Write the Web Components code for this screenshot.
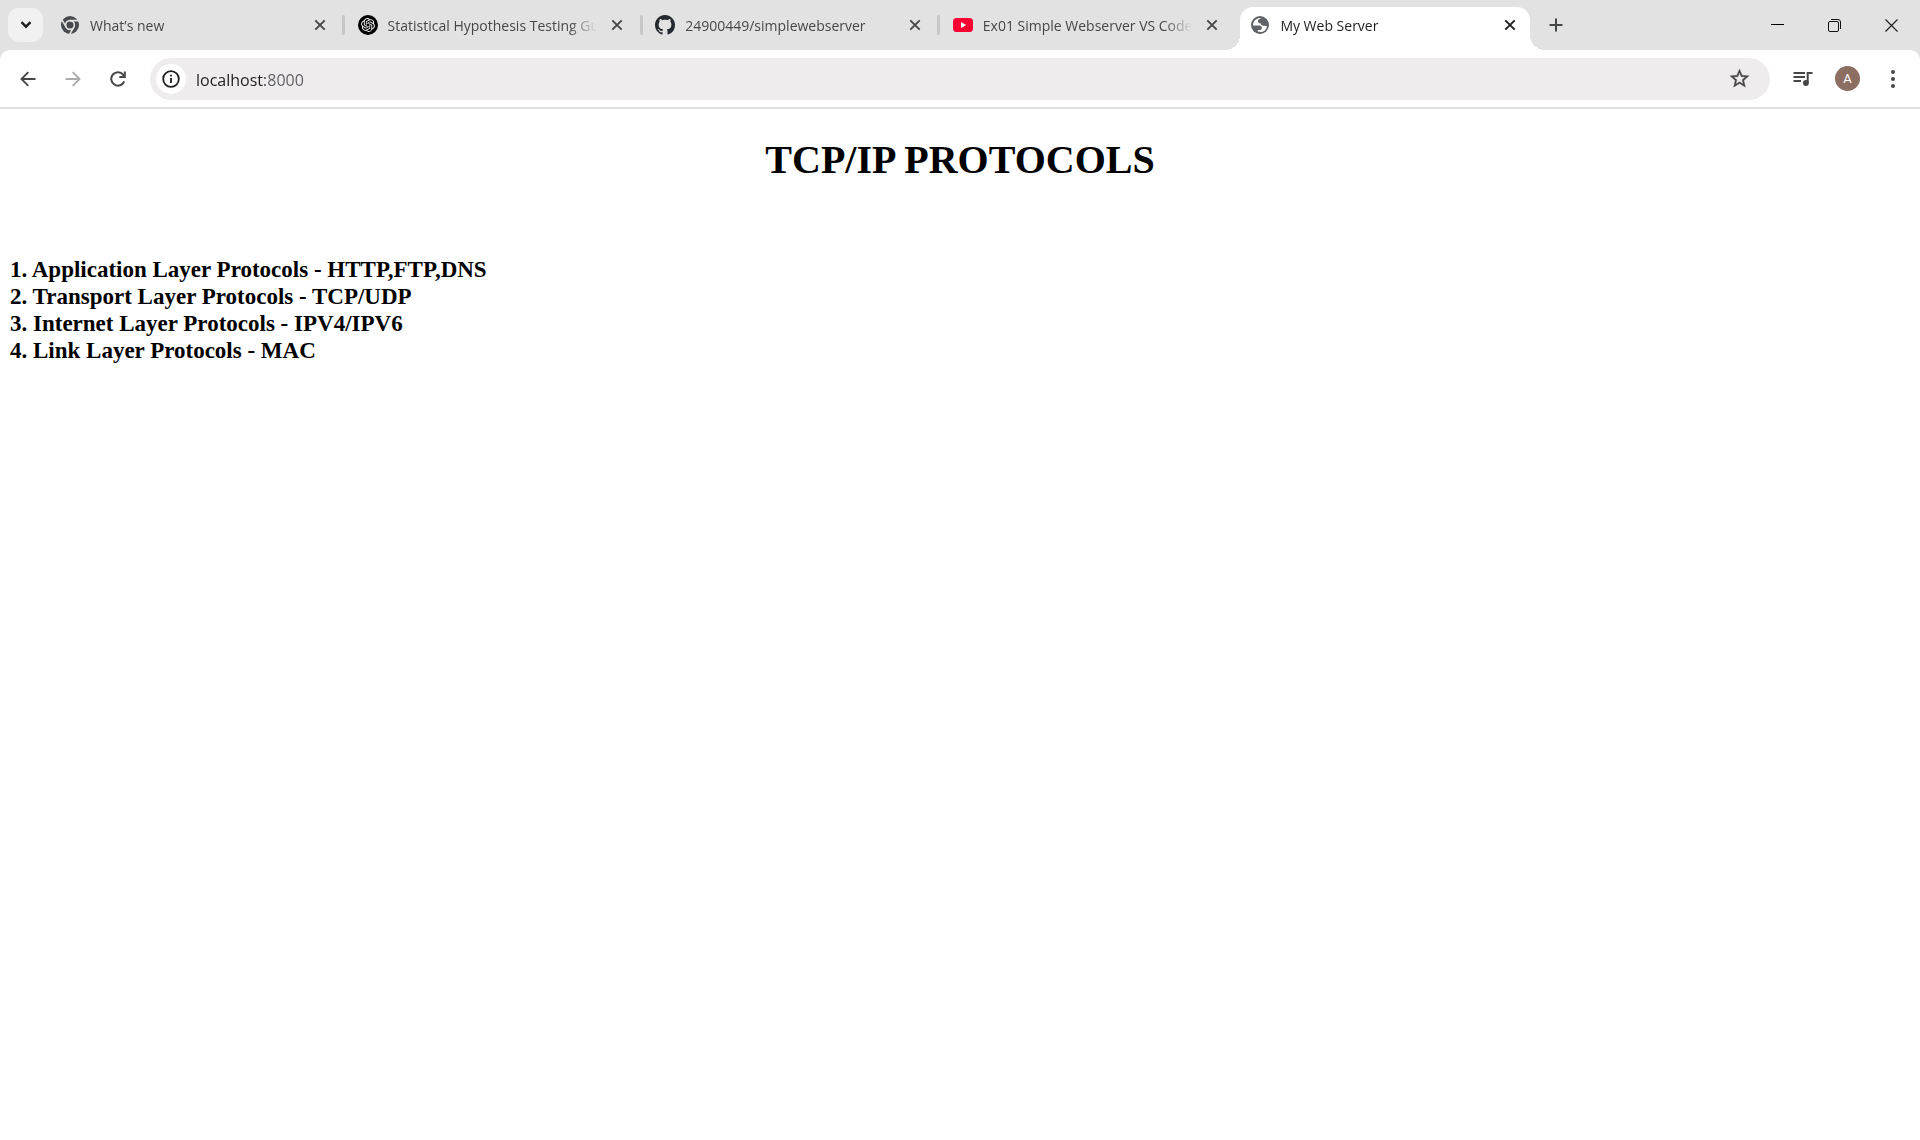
<!DOCTYPE html>
<html lang="en">
<head>
<meta charset="utf-8">
<title>My Web Server</title>
<style>
  body { margin: 0; background: #fff; }
</style>
</head>
<body>
<browser-window></browser-window>

<template id="browser-window">
  <style>
    :host { display: flex; flex-direction: column; min-height: 100vh; background: #fff; font-family: "Open Sans", "Noto Sans", sans-serif; }
  </style>
  <tab-strip>
    <browser-tab label="What’s new"><site-icon slot="icon" name="chrome"></site-icon></browser-tab>
    <tab-divider></tab-divider>
    <browser-tab label="Statistical Hypothesis Testing Gu"><site-icon slot="icon" name="openai"></site-icon></browser-tab>
    <tab-divider></tab-divider>
    <browser-tab label="24900449/simplewebserver"><site-icon slot="icon" name="github"></site-icon></browser-tab>
    <tab-divider></tab-divider>
    <browser-tab label="Ex01 Simple Webserver VS Code"><site-icon slot="icon" name="youtube"></site-icon></browser-tab>
    <tab-divider hidden-line></tab-divider>
    <browser-tab label="My Web Server" active><site-icon slot="icon" name="globe"></site-icon></browser-tab>
  </tab-strip>
  <tool-bar></tool-bar>
  <protocol-page></protocol-page>
</template>

<template id="tab-strip">
  <style>
    :host { display: flex; align-items: stretch; height: 50px; background: #e2e2e2; }
    button { border: 0; padding: 0; background: none; display: grid; place-items: center; color: #1f1f1f; }
    .search { width: 35px; height: 34px; margin: 8px 7px 8px 8px; border-radius: 11px; background: #f1f1f1; flex: none; }
    nav { display: flex; flex: 0 1 1480px; min-width: 0; }
    .add { width: 34px; margin-left: 9px; color: #444746; flex: none; }
    .window { display: flex; margin-left: auto; }
    .window button { width: 57px; }
  </style>
  <button class="search" aria-label="Search tabs"><svg width="12" height="8" viewBox="0 0 12 8" fill="none" stroke="currentColor" stroke-width="2.4"><path d="M1.5 1.2 6 5.7l4.500-4.500"/></svg></button>
  <nav aria-label="Tabs"><slot></slot></nav>
  <button class="add" aria-label="New tab"><svg width="14" height="14" viewBox="0 0 14 14" stroke="currentColor" stroke-width="2"><path d="M7 .5v13M.5 7h13"/></svg></button>
  <div class="window">
    <button aria-label="Minimize"><svg width="13" height="13" viewBox="0 0 13 13" stroke="#000"><path d="M0 5.500h13"/></svg></button>
    <button aria-label="Restore"><svg width="13" height="13" viewBox="0 0 13 13" fill="none" stroke="#111"><rect x=".5" y="2.500" width="10" height="10" rx="1.500"/><path d="M3 .5h7a2.500 2.500 0 0 1 2.500 2.500v7"/></svg></button>
    <button aria-label="Close window"><svg width="13" height="13" viewBox="0 0 13 13" stroke="#222" stroke-width="1.200"><path d="M.5.5l12 12M12.500.5l-12 12"/></svg></button>
  </div>
</template>

<template id="tab-divider">
  <style>
    :host { display: grid; place-items: center; flex: 0 0 8px; }
    i { width: 3px; height: 20px; border-radius: 2px; background: #c7c7c7; }
    :host([hidden-line]) i { visibility: hidden; }
  </style>
  <i></i>
</template>

<template id="browser-tab">
  <style>
    :host { display: flex; flex: 1 1 0; min-width: 0; position: relative; align-items: center; gap: 10px; padding: 0 10px; box-sizing: border-box; color: #474747; }
    :host([active]) { color: #1f1f1f; }
    :host([active])::before { content: ""; position: absolute; inset: 7px 0 0; border-radius: 13px 13px 0 0; background: #fff; }
    .foot { display: none; position: absolute; bottom: 0; width: 15px; height: 15px; }
    :host([active]) .foot { display: block; }
    .left { right: 100%; background: radial-gradient(circle at 0 0, transparent 15px, #fff 15px); }
    .right { left: 100%; background: radial-gradient(circle at 100% 0, transparent 15px, #fff 15px); }
    slot, a, button { position: relative; }
    slot { display: grid; place-items: center; width: 20px; flex: none; }
    a { flex: 1; min-width: 0; padding-top: 2px; overflow: hidden; white-space: nowrap; font-size: 14px; line-height: 20px; color: inherit; text-decoration: none;
        -webkit-mask-image: linear-gradient(to left, transparent, #000 28px); mask-image: linear-gradient(to left, transparent, #000 28px); }
    button { flex: none; width: 20px; height: 20px; padding: 0; border: 0; background: none; color: inherit; display: grid; place-items: center; }
  </style>
  <span class="foot left"></span><span class="foot right"></span>
  <slot name="icon"></slot>
  <a href="#"></a>
  <button aria-label="Close tab"><svg width="12" height="12" viewBox="0 0 12 12" stroke="currentColor" stroke-width="1.900"><path d="M1.300 1.300l9.400 9.400M10.700 1.300l-9.400 9.400"/></svg></button>
</template>

<template id="tool-bar">
  <style>
    :host { display: block; background: #e2e2e2; }
    .bar { display: flex; align-items: center; height: 57px; padding: 0 5px; border-bottom: 2px solid #e0e0e0; border-radius: 10px 10px 0 0; background: #fff; color: #474747; }
    button { width: 45px; height: 42px; flex: none; padding: 0; border: 0; background: none; color: inherit; display: grid; place-items: center; }
    button:disabled { color: #ababab; }
    .address { display: flex; align-items: center; flex: 1; min-width: 0; height: 42px; margin: 0 10px; padding: 0 8px 0 6px; border-radius: 21px; background: #eeeced; box-sizing: border-box; }
    .address .info { width: 30px; height: 30px; border-radius: 50%; background: #fff; color: #1f1f1f; }
    input { flex: 1; min-width: 0; margin-left: 10px; padding: 2px 0 0; border: 0; outline: 0; font: 16px/24px "Open Sans", "Noto Sans", sans-serif;
            color: transparent; background: linear-gradient(to right, #1f1f1f 69px, #5b5c60 69px); -webkit-background-clip: text; background-clip: text; }
    .avatar span { display: grid; place-items: center; width: 25px; height: 25px; border-radius: 50%; background: #8d6e63; color: #fff; font: 13px/25px Roboto, sans-serif; }
  </style>
  <div class="bar">
    <button aria-label="Back"><svg width="16" height="16" viewBox="0 0 16 16" fill="none" stroke="currentColor" stroke-width="1.900"><path d="M15.500 8H2M8.300 1.200 1.500 8l6.800 6.800"/></svg></button>
    <button aria-label="Forward" disabled><svg width="16" height="16" viewBox="0 0 16 16" fill="none" stroke="currentColor" stroke-width="1.900"><path d="M.5 8H14M7.700 1.200 14.500 8l-6.800 6.800"/></svg></button>
    <button aria-label="Reload"><svg width="16" height="16" viewBox="0 0 16 16" fill="none" stroke="currentColor" stroke-width="2"><path d="M14.200 10.300A6.700 6.700 0 1 1 13.200 3.800L14.500 5.600M14.800.5v5.600H9.300"/></svg></button>
    <div class="address">
      <button class="info" aria-label="View site information"><svg width="18" height="18" viewBox="0 0 18 18" fill="none" stroke="currentColor" stroke-width="1.800"><circle cx="9" cy="9" r="7.800"/><path d="M9 8v5M9 4.700v1.900"/></svg></button>
      <input type="text" aria-label="Address" value="localhost:8000" spellcheck="false">
      <button aria-label="Bookmark this tab"><svg width="23" height="23" viewBox="0 0 24 24" fill="currentColor" stroke="currentColor" stroke-width=".3"><path d="M22 9.240l-7.190-.62L12 2 9.190 8.630 2 9.240l5.460 4.730L5.820 21 12 17.270 18.180 21l-1.630-7.030L22 9.240zM12 15.400l-3.760 2.270 1-4.280-3.320-2.880 4.380-.38L12 6.100l1.710 4.040 4.380.38-3.320 2.880 1 4.280L12 15.400z"/></svg></button>
    </div>
    <button aria-label="Media controls"><svg width="20" height="16" viewBox="0 0 20 16" fill="none" stroke="currentColor" stroke-width="2"><path d="M.5 2h11.500M.5 6h11.500M.5 10H8M14.700 12V2H19.500"/><circle cx="12.900" cy="12" r="2.900" fill="currentColor" stroke="none"/></svg></button>
    <button class="avatar" aria-label="Profile"><span>A</span></button>
    <button aria-label="Menu"><svg width="4" height="20" viewBox="0 0 4 20" fill="currentColor"><circle cx="2" cy="3" r="2"/><circle cx="2" cy="10" r="2"/><circle cx="2" cy="17" r="2"/></svg></button>
  </div>
</template>

<template id="protocol-page">
  <style>
    :host { display: block; padding: 28px 10px; font-family: "Liberation Serif", "Times New Roman", serif; color: #000; }
    h1 { margin: 0 0 73px; text-align: center; font-size: 40px; line-height: 46px; }
    h3 { margin: 0; font-size: 23px; line-height: 27px; }
  </style>
  <h1>TCP/IP PROTOCOLS</h1>
  <h3>1. Application Layer Protocols - HTTP,FTP,DNS<br>2. Transport Layer Protocols - TCP/UDP<br>3. Internet Layer Protocols - IPV4/IPV6<br>4. Link Layer Protocols - MAC</h3>
</template>

<script>
const stamp = (host, id) => {
  const root = host.attachShadow({ mode: "open" });
  root.append(document.getElementById(id).content.cloneNode(true));
  return root;
};

const siteIcons = {
  chrome: `<svg width="18" height="18" viewBox="0 0 18 18"><circle cx="9" cy="9" r="9" fill="#474b50"/><circle cx="9" cy="9" r="4.400" fill="none" stroke="#e2e2e2" stroke-width="1.600"/><path d="M9 4.600h8.500M5.200 11.200 1 3.900M12.800 11.200 8.600 18.500" stroke="#e2e2e2" stroke-width="1.600"/></svg>`,
  openai: `<svg width="20" height="20" viewBox="0 0 40 40"><circle cx="20" cy="20" r="20"/><path transform="translate(6.200 6.200) scale(1.150)" fill="#fff" d="M22.2819 9.8211a5.9847 5.9847 0 0 0-.5157-4.9108 6.0462 6.0462 0 0 0-6.5098-2.9A6.0651 6.0651 0 0 0 4.9807 4.1818a5.9847 5.9847 0 0 0-3.9977 2.9 6.0462 6.0462 0 0 0 .7427 7.0966 5.98 5.98 0 0 0 .511 4.9107 6.051 6.051 0 0 0 6.5146 2.9001A5.9847 5.9847 0 0 0 13.2599 24a6.0557 6.0557 0 0 0 5.7718-4.2058 5.9894 5.9894 0 0 0 3.9977-2.9001 6.0557 6.0557 0 0 0-.7475-7.0729zm-9.022 12.6081a4.4755 4.4755 0 0 1-2.8764-1.0408l.1419-.0804 4.7783-2.7582a.7948.7948 0 0 0 .3927-.6813v-6.7369l2.02 1.1686a.071.071 0 0 1 .038.052v5.5826a4.504 4.504 0 0 1-4.4945 4.4944zm-9.6607-4.1254a4.4708 4.4708 0 0 1-.5346-3.0137l.142.0852 4.783 2.7582a.7712.7712 0 0 0 .7806 0l5.8428-3.3685v2.3324a.0804.0804 0 0 1-.0332.0615L9.74 19.9502a4.4992 4.4992 0 0 1-6.1408-1.6464zM2.3408 7.8956a4.485 4.485 0 0 1 2.3655-1.9728V11.6a.7664.7664 0 0 0 .3879.6765l5.8144 3.3543-2.0201 1.1685a.0757.0757 0 0 1-.071 0l-4.8303-2.7865A4.504 4.504 0 0 1 2.3408 7.872zm16.5963 3.8558L13.1038 8.364 15.1192 7.2a.0757.0757 0 0 1 .071 0l4.8303 2.7913a4.4944 4.4944 0 0 1-.6765 8.1042v-5.6772a.79.79 0 0 0-.407-.667zm2.0107-3.0231l-.142-.0852-4.7735-2.7818a.7759.7759 0 0 0-.7854 0L9.409 9.2297V6.8974a.0662.0662 0 0 1 .0284-.0615l4.8303-2.7866a4.4992 4.4992 0 0 1 6.6802 4.66zM8.3065 12.863l-2.02-1.1638a.0804.0804 0 0 1-.038-.0567V6.0742a4.4992 4.4992 0 0 1 7.3757-3.4537l-.142.0805L8.704 5.459a.7948.7948 0 0 0-.3927.6813zm1.0976-2.3654l2.602-1.4998 2.6069 1.4998v2.9994l-2.5974 1.4997-2.6067-1.4997Z"/></svg>`,
  github: `<svg width="20" height="20" viewBox="0 0 16 16" fill="#24292f"><path d="M8 0C3.580 0 0 3.580 0 8c0 3.540 2.290 6.530 5.470 7.590.4.070.55-.17.55-.38 0-.19-.01-.82-.01-1.490-2.010.37-2.530-.49-2.690-.94-.09-.23-.48-.94-.82-1.130-.28-.15-.68-.52-.01-.53.63-.01 1.080.58 1.230.82.72 1.210 1.870.87 2.330.66.070-.52.28-.87.51-1.070-1.780-.2-3.640-.89-3.640-3.950 0-.87.31-1.590.82-2.150-.08-.2-.36-1.020.08-2.120 0 0 .67-.21 2.200.82.64-.18 1.320-.27 2-.27s1.360.09 2 .27c1.530-1.040 2.200-.82 2.200-.82.44 1.100.16 1.920.08 2.120.51.56.82 1.270.82 2.150 0 3.070-1.870 3.750-3.650 3.950.29.25.54.73.54 1.480 0 1.070-.01 1.930-.01 2.200 0 .21.15.46.55.38A8.010 8.010 0 0 0 16 8c0-4.420-3.580-8-8-8z"/></svg>`,
  youtube: `<svg width="20" height="14" viewBox="0 0 20 14"><rect width="20" height="14" rx="3.500" fill="#ff0033"/><path fill="#fff" d="M8 4l5.200 3L8 10z"/></svg>`,
  globe: `<svg width="18" height="18" viewBox="0 0 18 18"><circle cx="9" cy="9" r="9" fill="#5f6368"/><path fill="#fff" d="M10.800 2.100C8.500 2.400 6.900 3.800 6.900 5.300c0 1.600 1.300 2 2.600 2 .2 1.600 1.300 2.500 3.100 2.500 1.700 0 2.100.6 3.500.4-.5 3.300-3.300 5.800-6.600 5.900-1 0-1.900-.2-2.700-.5v-1.500h2c1.300 0 2-.8 2-2.100 0-1.600-1-2.400-2.700-2.400H1.900C1.900 5.800 4.700 2.400 8.600 1.900z"/></svg>`
};

customElements.define("site-icon", class extends HTMLElement {
  constructor() {
    super();
    this.attachShadow({ mode: "open" });
  }
  connectedCallback() {
    this.shadowRoot.innerHTML = `<style>:host{display:block}svg{display:block}</style>${siteIcons[this.getAttribute("name")]}`;
  }
});

customElements.define("browser-tab", class extends HTMLElement {
  constructor() {
    super();
    stamp(this, "browser-tab");
  }
  connectedCallback() {
    this.shadowRoot.querySelector("a").textContent = this.getAttribute("label");
  }
});

for (const name of ["tab-divider", "tab-strip", "tool-bar", "protocol-page", "browser-window"]) {
  customElements.define(name, class extends HTMLElement {
    constructor() {
      super();
      stamp(this, name);
    }
  });
}
</script>
</body>
</html>
